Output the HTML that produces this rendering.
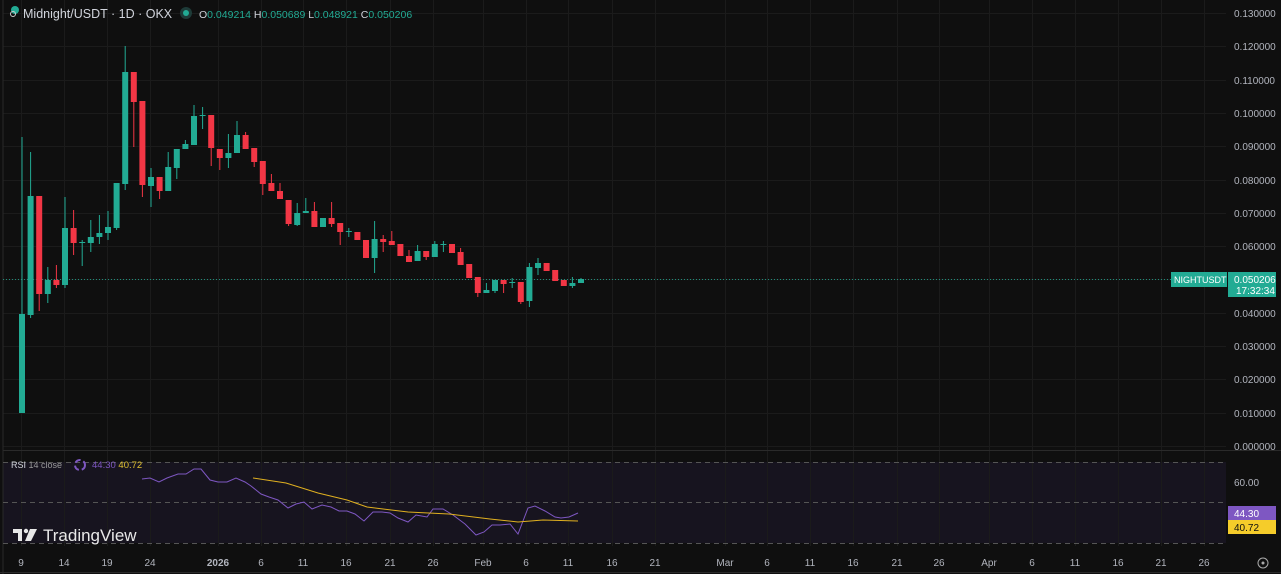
<!DOCTYPE html>
<html><head><meta charset="utf-8"><style>
html,body{margin:0;padding:0;background:#0f0f0f;width:1281px;height:574px;overflow:hidden;font-family:"Liberation Sans",sans-serif}
svg{position:absolute;left:0;top:0}
</style></head><body>
<svg id="s" width="1281" height="574" xmlns="http://www.w3.org/2000/svg" font-family="Liberation Sans, sans-serif">
<rect width="1281" height="574" fill="#0f0f0f"/>
<rect x="3" y="462" width="1223" height="81" fill="#17141f"/>
<g id="grid" stroke="#1b1b1b" stroke-width="1"></g>
<line x1="3" y1="0" x2="3" y2="574" stroke="#2a2a2a"/>
<line x1="3" y1="450.5" x2="1281" y2="450.5" stroke="#2a2a2a"/>
<line x1="0" y1="572.5" x2="1281" y2="572.5" stroke="#2a2a2a"/>
<g stroke="#555" stroke-dasharray="5,4" stroke-width="1">
<line x1="3" y1="462.5" x2="1226" y2="462.5"/>
<line x1="3" y1="502.5" x2="1226" y2="502.5"/>
<line x1="3" y1="543.5" x2="1226" y2="543.5"/>
</g>
<line x1="3" y1="279.5" x2="1226" y2="279.5" stroke="#22ab94" stroke-dasharray="1,2" opacity="0.8"/>
<g id="c"></g>
<polyline id="rsi" fill="none" stroke="#7e57c2" stroke-width="1"/>
<polyline fill="none" stroke="#e0b020" stroke-width="1" points="253,478 286,483 318,493 347,500 367,507 408,512 449,514 490,519 518,522 543,520 578,521"/>
<g id="ax" font-size="10" fill="#b2b5be"></g>
<text x="23" y="18" font-size="12.5" fill="#d1d4dc">Midnight/USDT · 1D · OKX</text>
<circle cx="15" cy="10" r="4" fill="#22ab94"/><circle cx="13" cy="14" r="2.5" fill="none" stroke="#ccc"/>
<circle cx="186" cy="13" r="6" fill="#1e3b38"/><circle cx="186" cy="13" r="3" fill="#22ab94"/>
<text x="199" y="18" font-size="10.5" fill="#22ab94"><tspan fill="#d1d4dc">O</tspan>0.049214 <tspan fill="#d1d4dc">H</tspan>0.050689 <tspan fill="#d1d4dc">L</tspan>0.048921 <tspan fill="#d1d4dc">C</tspan>0.050206</text>
<text x="11" y="468" font-size="9" fill="#d1d4dc">RSI <tspan fill="#999">14 close</tspan></text>
<circle cx="80" cy="465" r="5" fill="none" stroke="#7e57c2" stroke-width="2" stroke-dasharray="6,3"/>
<text x="92" y="468" font-size="9.5" fill="#7e57c2">44.30 <tspan fill="#e0c030">40.72</tspan></text>
<g fill="#e8e8e8"><rect x="13" y="529" width="9" height="4"/><rect x="18" y="529" width="4" height="12"/><circle cx="26" cy="531" r="2.2"/><polygon points="30,529 37,529 31,541 25,541"/></g>
<text x="43" y="541" font-size="17" fill="#e8e8e8">TradingView</text>
<rect x="1171" y="272" width="56" height="15" fill="#22ab94"/>
<text x="1174" y="283" font-size="9" fill="#fff">NIGHTUSDT</text>
<rect x="1228" y="272" width="48" height="25" fill="#22ab94"/>
<text x="1234" y="283" font-size="10" fill="#fff">0.050206</text>
<text x="1236" y="294" font-size="10" fill="#fff">17:32:34</text>
<rect x="1228" y="506" width="48" height="14" fill="#7e57c2"/>
<text x="1234" y="517" font-size="10" fill="#fff">44.30</text>
<rect x="1228" y="520" width="48" height="14" fill="#f5cc2a"/>
<text x="1234" y="531" font-size="10" fill="#111">40.72</text>
<text x="1234" y="486" font-size="10" fill="#b2b5be">60.00</text>
<circle cx="1263" cy="563" r="5" fill="none" stroke="#aaa"/><circle cx="1263" cy="563" r="1.5" fill="#aaa"/>
</svg>
<script>
var ns="http://www.w3.org/2000/svg";
function el(p,t,a,txt){var e=document.createElementNS(ns,t);for(var k in a)e.setAttribute(k,a[k]);if(txt)e.textContent=txt;p.appendChild(e);return e;}
var g=document.getElementById('grid'),ax=document.getElementById('ax');
var xs=[[21,"9"],[64,"14"],[107,"19"],[150,"24"],[218,"2026"],[261,"6"],[303,"11"],[346,"16"],[390,"21"],[433,"26"],[483,"Feb"],[526,"6"],[568,"11"],[612,"16"],[655,"21"],[725,"Mar"],[767,"6"],[810,"11"],[853,"16"],[897,"21"],[939,"26"],[989,"Apr"],[1032,"6"],[1075,"11"],[1118,"16"],[1161,"21"],[1204,"26"]];
xs.forEach(function(a){el(g,'line',{x1:a[0]+.5,y1:0,x2:a[0]+.5,y2:546});var t=el(ax,'text',{x:a[0],y:566,'text-anchor':'middle'},a[1]);if(a[1]=="2026")t.setAttribute('font-weight','bold');});
for(var i=0;i<=13;i++){var y=Math.round(13+i*33.3);el(g,'line',{x1:3,y1:y+.5,x2:1226,y2:y+.5});el(ax,'text',{x:1234,y:y+4},(0.13-i*0.01).toFixed(6));}
var C=[[413,314,137,413],[315,196,152,318],[196,294,196,311],[294,280,267,303],[280,285,265,288],[285,228,197,288],[228,243,210,255],[242,242,240,266],[243,237,220,252],[237,233,215,244],[233,227,211,240],[228,183,183,230],[184,72,46,190],[72,102,72,147],[101,185,101,197],[186,177,168,207],[177,191,177,199],[191,167,152,191],[168,149,149,179],[149,144,140,149],[145,116,105,145],[115,115,107,129],[115,148,115,166],[149,158,149,170],[158,153,134,168],[153,135,121,153],[135,149,132,149],[148,162,148,167],[161,184,161,195],[183,191,174,191],[191,199,183,199],[200,224,200,226],[225,213,203,226],[213,211,198,213],[211,227,202,227],[227,218,218,227],[218,224,202,227],[223,232,223,245],[231,231,228,237],[232,240,232,240],[240,258,240,258],[258,239,221,273],[239,242,235,252],[241,245,231,245],[244,256,244,256],[256,262,250,262],[261,251,245,261],[251,257,251,260],[257,244,241,257],[244,244,241,252],[244,253,244,253],[252,265,248,265],[264,278,264,278],[277,293,277,297],[293,290,283,293],[291,280,280,293],[280,284,280,293],[282,282,278,288],[282,302,282,304],[301,267,263,307],[268,263,258,275],[263,271,263,271],[270,281,270,281],[280,286,280,286],[286,283,277,288],[283,279,278,283]];
var cg=document.getElementById('c');
C.forEach(function(d,i){var x=22+i*8.6;var col=d[1]>d[0]?'#f23645':'#22ab94';
el(cg,'line',{x1:x,y1:d[2],x2:x,y2:d[3],stroke:col,'stroke-width':1});
var t=Math.min(d[0],d[1]),h=Math.max(1,Math.abs(d[0]-d[1]));el(cg,'rect',{x:x-3,y:t,width:6,height:h,fill:col});});
document.getElementById('rsi').setAttribute('points',"142,479 150,478 159,482 167,478 178,474 186,474 194,469 201,469 210,480 218,482 227,482 236,478 245,482 251,486 261,494 269,497 278,500 288,508 296,504 304,502 312,509 322,505 331,507 339,511 347,511 355,514 364,521 373,512 382,512 390,513 398,518 408,522 416,515 427,517 433,509 443,509 453,515 465,524 476,535 484,532 492,525 500,525 510,524 518,534 528,508 535,506 545,511 555,517 561,518 569,517 578,513");
</script>
</body></html>
